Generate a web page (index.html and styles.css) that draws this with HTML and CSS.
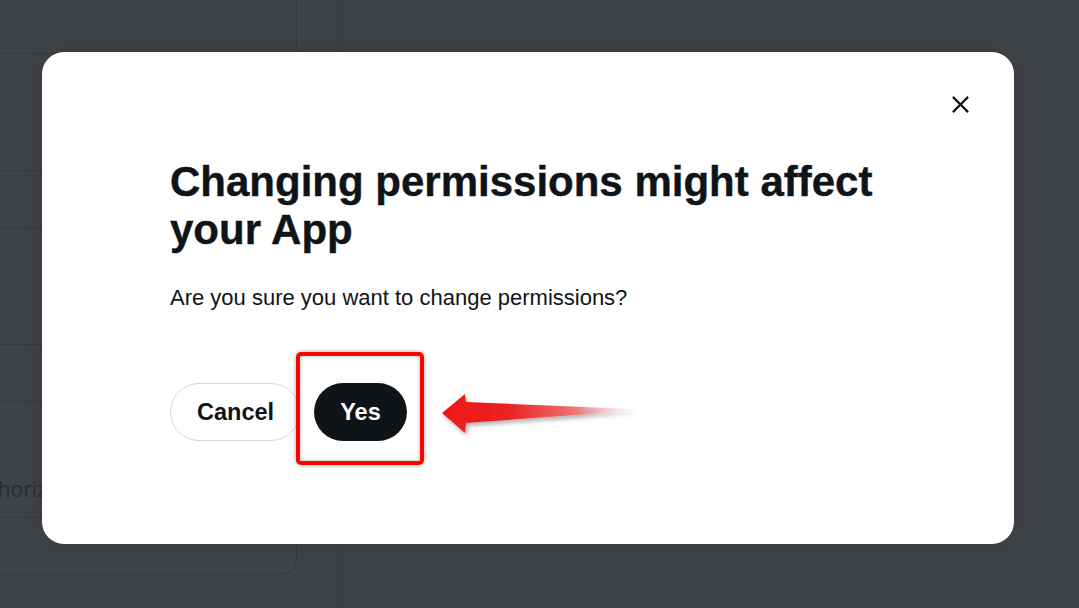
FILE: index.html
```html
<!DOCTYPE html>
<html lang="en">
<head>
<meta charset="utf-8">
<title>Changing permissions</title>
<link rel="stylesheet" href="styles.css">
</head>
<body>
<div class="page">
  <aside class="side">
    <div class="card">
      <div class="row r1"></div>
      <div class="row r2"></div>
      <div class="row r3"></div>
      <div class="row r2"></div>
      <div class="row r3"></div>
      <div class="row r4"><span class="ghost">Authorize</span></div>
      <div class="row r5"></div>
    </div>
  </aside>
  <div class="band"></div>
  <main class="rest"></main>
</div>

<div class="modal" role="dialog" aria-labelledby="mtitle">
  <div class="top">
    <button class="close" aria-label="Close">
      <svg viewBox="0 0 24 24" width="27" height="27"><path d="M10.59 12L4.54 5.96l1.42-1.42L12 10.59l6.04-6.05 1.42 1.42L13.41 12l6.05 6.04-1.42 1.42L12 13.41l-6.04 6.05-1.42-1.42L10.59 12z"/></svg>
    </button>
  </div>
  <div class="content">
    <h2 id="mtitle" class="title">Changing permissions might affect your App</h2>
    <p class="text">Are you sure you want to change permissions?</p>
    <div class="actions">
      <button class="btn btn-outline">Cancel</button>
      <button class="btn btn-dark">Yes</button>
    </div>
  </div>
</div>

<div class="highlight"></div>
<svg class="arrow" width="210" height="60" viewBox="0 0 210 60">
  <defs>
    <linearGradient id="ag" x1="12" y1="0" x2="202" y2="0" gradientUnits="userSpaceOnUse">
      <stop offset="0" stop-color="#f01818"/>
      <stop offset="0.35" stop-color="#ea2222"/>
      <stop offset="0.7" stop-color="#ee7474"/>
      <stop offset="1" stop-color="#fbe3e3" stop-opacity="0.3"/>
    </linearGradient>
    <filter id="ds" x="-10%" y="-40%" width="130%" height="190%">
      <feDropShadow dx="2" dy="3" stdDeviation="2" flood-color="#000" flood-opacity="0.3"/>
    </filter>
  </defs>
  <polygon points="12,28 35,9 36,17 202,24 202,26 36,38 35,48" fill="url(#ag)" filter="url(#ds)"/>
</svg>
</body>
</html>
```

FILE: styles.css
```css
html, body {
  margin: 0;
  padding: 0;
}
body {
  width: 1079px;
  height: 608px;
  overflow: hidden;
  background: #3f4246;
  font-family: "Liberation Sans", Arial, sans-serif;
  position: relative;
}
.page {
  display: flex;
  height: 608px;
}
.side {
  width: 337px;
  flex: none;
}
.card {
  width: 296px;
  margin-top: -21px;
  border: 1px solid #37393d;
  border-left: none;
  border-radius: 0 16px 16px 0;
  display: flex;
  flex-direction: column;
}
.row {
  border-bottom: 1px solid #37393d;
  display: flex;
  align-items: flex-end;
}
.row:last-child { border-bottom: none; }
.r1 { height: 73px; }
.r2 { height: 116px; }
.r3 { height: 56px; }
.r4 { height: 115px; }
.r5 { height: 56px; }
.ghost {
  font-family: "Open Sans", sans-serif;
  font-size: 21px;
  color: #2a2c2f;
  margin-left: -36px;
  margin-bottom: 14px;
}
.band {
  width: 8px;
  flex: none;
  background: linear-gradient(to right, #3b3e42, #3e4145);
}
.rest { flex: 1; }

.modal {
  position: absolute;
  left: 42px;
  top: 52px;
  width: 972px;
  height: 492px;
  background: #fff;
  border-radius: 22px;
  box-shadow: 0 0 18px rgba(0,0,0,0.12);
  display: flex;
  flex-direction: column;
}
.top {
  display: flex;
  justify-content: flex-end;
  padding: 32px 34px 0;
}
.close {
  width: 40px;
  height: 40px;
  border: none;
  background: transparent;
  padding: 0;
  display: flex;
  align-items: center;
  justify-content: center;
}
.close svg { fill: #0f1419; }
.content {
  padding: 34px 128px 0;
}
.title {
  margin: 0;
  font-size: 42px;
  line-height: 48px;
  font-weight: 700;
  color: #0f1419;
  -webkit-text-stroke: 0.4px #0f1419;
}
.text {
  margin: 30px 0 0;
  font-size: 22px;
  line-height: 28px;
  color: #0f1419;
}
.actions {
  display: flex;
  gap: 14px;
  margin-top: 71px;
}
.btn {
  height: 58px;
  border-radius: 29px;
  font-family: "Liberation Sans", Arial, sans-serif;
  font-size: 23.5px;
  font-weight: 700;
  padding: 0 26px;
  cursor: pointer;
}
.btn-outline {
  width: 130px;
  background: #fff;
  border: 1px solid #cfd9de;
  color: #0f1419;
}
.btn-dark {
  width: 93px;
  background: #0f1419;
  border: none;
  color: #fff;
}
.highlight {
  position: absolute;
  left: 296px;
  top: 352px;
  width: 120px;
  height: 105px;
  border: 4.5px solid #ff0000;
  border-radius: 5px;
  box-shadow: 0 0 4px rgba(0,0,0,0.35), inset 0 0 4px rgba(0,0,0,0.3);
}
.arrow {
  position: absolute;
  left: 430px;
  top: 385px;
}
```
